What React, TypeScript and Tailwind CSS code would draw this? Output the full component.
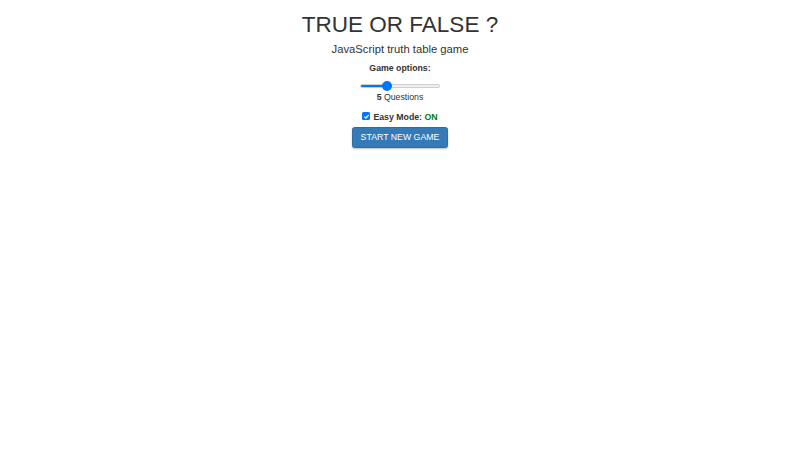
import React from "react";

export default function App() {
  return (
    <div
      className="w-[800px] h-[450px] bg-white text-[#333333] flex flex-col items-center"
      style={{ fontFamily: '"Liberation Sans", Arial, Helvetica, sans-serif' }}
    >
      <h1 className="mt-[12px] text-[22.5px] leading-[25px] font-normal">TRUE OR FALSE ?</h1>
      <div className="mt-[6px] text-[11.25px] leading-[12px]">JavaScript truth table game</div>
      <div className="mt-[7px] text-[8.75px] leading-[12.5px] font-bold">Game options:</div>
      <div className="mt-[6.5px] h-[10px] w-[80px] relative flex items-center">
        <div className="w-full h-[4px] rounded-full bg-[#efefef] border border-[#cfcfcf] relative overflow-hidden">
          <div className="absolute left-0 top-[-1px] bottom-[-1px] w-[28px] bg-[#0075ff]" />
        </div>
        <div className="absolute left-[22px] top-[0px] w-[10px] h-[10px] rounded-full bg-[#0075ff]" />
      </div>
      <div className="text-[8.75px] leading-[12.5px]">
        <span className="font-bold">5</span> Questions
      </div>
      <div className="mt-[7px] flex items-center text-[8.75px] leading-[12.5px] font-bold">
        <div className="w-[8px] h-[8px] rounded-[1.5px] bg-[#0075ff] flex items-center justify-center mr-[3px] mt-[-1px]">
          <svg width="7" height="7" viewBox="0 0 10 10">
            <path d="M2 5.2 L4.2 7.4 L8.2 2.6" fill="none" stroke="white" strokeWidth="1.8" />
          </svg>
        </div>
        <span>Easy Mode:&nbsp;</span>
        <span className="text-[#008000]">ON</span>
      </div>
      <button className="mt-[3.5px] h-[21px] px-[7.5px] bg-[#337ab7] border border-[#2e6da4] rounded-[2.5px] text-white text-[8.75px] leading-[12.5px] shadow-[0_1px_2px_rgba(0,0,0,0.25)]">
        START NEW GAME
      </button>
    </div>
  );
}
